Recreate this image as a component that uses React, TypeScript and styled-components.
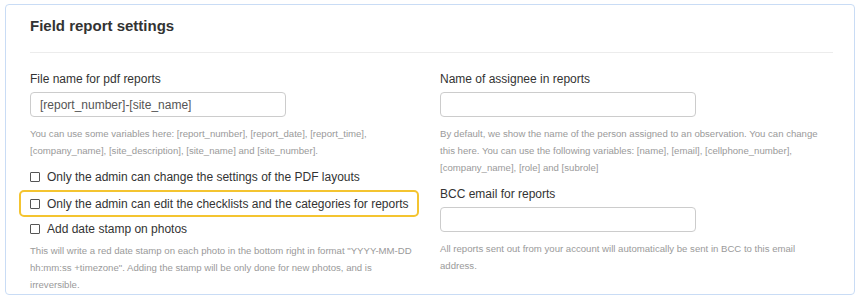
import React from "react";
import styled, { createGlobalStyle } from "styled-components";

const GlobalStyle = createGlobalStyle`
  html, body {
    margin: 0;
    padding: 0;
    background: #ffffff;
  }
  body {
    font-family: "Liberation Sans", Arial, Helvetica, sans-serif;
    color: #333333;
  }
`;

const Page = styled.div`
  padding: 4px 5px 0 5px;
`;

const Card = styled.section`
  border: 1px solid #c9dcf5;
  border-radius: 4px;
  padding: 12px 21px 0 24px;
  height: 291px;
  box-sizing: border-box;
  background: #fff;
`;

const Title = styled.h2`
  margin: 0;
  font-size: 15px;
  line-height: 18px;
  font-weight: bold;
  color: #333;
`;

const Divider = styled.hr`
  border: 0;
  border-top: 1px solid #ececec;
  margin: 17px 0 18px 0;
`;

const Columns = styled.div`
  display: grid;
  grid-template-columns: 386px 380px;
  column-gap: 24px;
  align-items: start;
`;

const Column = styled.div`
  display: flex;
  flex-direction: column;
`;

const Label = styled.label<{ $top?: number }>`
  display: block;
  font-size: 12px;
  line-height: 16px;
  color: #333;
  margin-top: ${(p) => p.$top ?? 0}px;
  margin-bottom: 5px;
`;

const TextInput = styled.input`
  box-sizing: border-box;
  width: 256px;
  height: 25px;
  border: 1px solid #cccccc;
  border-radius: 4px;
  padding: 0 9px;
  font-family: "Liberation Sans", Arial, sans-serif;
  font-size: 12px;
  color: #555;
  background: #fff;
  outline: none;
`;

const Help = styled.p<{ $top?: number }>`
  margin: ${(p) => p.$top ?? 8}px 0 0 0;
  font-size: 9.6px;
  line-height: 17px;
  color: #9a9a9a;
`;

const NoWrap = styled.span`
  white-space: nowrap;
`;

const Checks = styled.div`
  display: flex;
  flex-direction: column;
  margin-top: 5px;
`;

const CheckRow = styled.label<{ $highlight?: boolean }>`
  display: flex;
  align-items: center;
  gap: 7px;
  height: 26px;
  box-sizing: border-box;
  font-size: 12px;
  color: #333;
  ${(p) =>
    p.$highlight
      ? `
    border: 2px solid #f4c430;
    border-radius: 5px;
    margin: 0 -3px 0 -11px;
    padding-left: 9px;
    height: 27px;
    margin-bottom: -1px;
  `
      : ""}
`;

const Box = styled.span`
  display: inline-block;
  width: 10px;
  height: 10px;
  box-sizing: border-box;
  border: 1px solid #555;
  border-radius: 1px;
  background: #fff;
  flex: none;
`;

export default function App() {
  return (
    <>
      <GlobalStyle />
      <Page>
        <Card>
          <Title>Field report settings</Title>
          <Divider />
          <Columns>
            <Column>
              <Label>File name for pdf reports</Label>
              <TextInput defaultValue="[report_number]-[site_name]" />
              <Help>
                You can use some variables here: [report_number], [report_date], [report_time],
                [company_name], [site_description], [site_name] and [site_number].
              </Help>
              <Checks>
                <CheckRow>
                  <Box />
                  Only the admin can change the settings of the PDF layouts
                </CheckRow>
                <CheckRow $highlight>
                  <Box />
                  Only the admin can edit the checklists and the categories for reports
                </CheckRow>
                <CheckRow>
                  <Box />
                  Add date stamp on photos
                </CheckRow>
              </Checks>
              <Help $top={0}>
                This will write a red date stamp on each photo in the bottom right in format{" "}
                <NoWrap>"YYYY-MM-DD</NoWrap> hh:mm:ss +timezone". Adding the stamp will be only
                done for new photos, and is irreversible.
              </Help>
            </Column>
            <Column>
              <Label>Name of assignee in reports</Label>
              <TextInput />
              <Help>
                By default, we show the name of the person assigned to an observation. You can
                change this here. You can use the following variables: [name], [email],
                [cellphone_number], [company_name], [role] and [subrole]
              </Help>
              <Label $top={10}>BCC email for reports</Label>
              <TextInput />
              <Help>
                All reports sent out from your account will automatically be sent in BCC to this
                email address.
              </Help>
            </Column>
          </Columns>
        </Card>
      </Page>
    </>
  );
}
